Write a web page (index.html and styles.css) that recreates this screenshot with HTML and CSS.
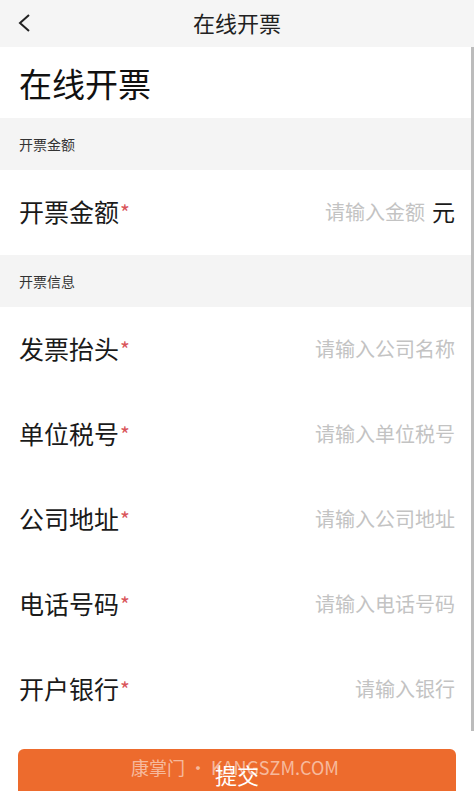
FILE: index.html
```html
<!DOCTYPE html>
<html lang="zh-CN">
<head>
  <meta charset="UTF-8">
  <meta name="viewport" content="width=device-width, initial-scale=1.0">
  <title>在线开票</title>
  <link rel="stylesheet" href="styles.css">
</head>
<body>
  <div class="navbar">
    <svg class="back" width="16" height="20" viewBox="0 0 16 20">
      <path d="M12 2 L3 10 L12 18" fill="none" stroke="#222" stroke-width="2"/>
    </svg>
    <div class="nav-title">在线开票</div>
  </div>

  <div class="page-title">在线开票</div>

  <div class="section">开票金额</div>
  <div class="row">
    <div class="label">开票金额<span class="req">*</span></div>
    <div class="field">
      <span class="placeholder">请输入金额</span>
      <span class="unit">元</span>
    </div>
  </div>

  <div class="section">开票信息</div>
  <div class="row">
    <div class="label">发票抬头<span class="req">*</span></div>
    <span class="placeholder">请输入公司名称</span>
  </div>
  <div class="row">
    <div class="label">单位税号<span class="req">*</span></div>
    <span class="placeholder">请输入单位税号</span>
  </div>
  <div class="row">
    <div class="label">公司地址<span class="req">*</span></div>
    <span class="placeholder">请输入公司地址</span>
  </div>
  <div class="row">
    <div class="label">电话号码<span class="req">*</span></div>
    <span class="placeholder">请输入电话号码</span>
  </div>
  <div class="row">
    <div class="label">开户银行<span class="req">*</span></div>
    <span class="placeholder">请输入银行</span>
  </div>

  <div class="actions">
    <button class="submit">提交</button>
  </div>

  <div class="scrollbar"></div>
  <div class="watermark">康掌门 • KANGSZM.COM</div>
</body>
</html>
```

FILE: styles.css
```css
html, body {
  margin: 0;
  height: 791px;
  overflow: hidden;
}

body {
  font-family: "Noto Sans CJK SC", "Noto Sans", sans-serif;
  background: #fff;
  color: #1a1a1a;
  position: relative;
}

.navbar {
  height: 47px;
  background: #f5f5f5;
  display: flex;
  align-items: center;
  justify-content: center;
  position: relative;
}

.back {
  position: absolute;
  left: 17px;
  top: 13px;
}

.nav-title {
  font-size: 22px;
  line-height: 1;
  margin-top: -3px;
  color: #222;
}

.page-title {
  height: 71px;
  display: flex;
  align-items: center;
  padding-left: 19px;
  font-size: 33px;
  color: #111;
}

.section {
  height: 52px;
  background: #f4f4f4;
  display: flex;
  align-items: center;
  padding-left: 19px;
  font-size: 14px;
  color: #333;
}

.row {
  height: 85px;
  display: flex;
  align-items: center;
  justify-content: space-between;
  padding: 0 19px;
}

.row:nth-of-type(2) {
  height: 84px;
}

.label {
  font-size: 25px;
  line-height: 1;
  margin-top: -3px;
  color: #1a1a1a;
}

.req {
  color: #d9545a;
  font-size: 21px;
  margin-left: 1px;
  vertical-align: 1px;
}

.field {
  display: flex;
  align-items: center;
  gap: 7px;
  margin-top: -3px;
}

.row > .placeholder {
  margin-top: -3px;
}

.placeholder {
  font-size: 20px;
  color: #c3c3c3;
}

.unit {
  font-size: 23px;
  color: #1a1a1a;
}

.actions {
  padding: 17px 18px 0;
}

.submit {
  width: 100%;
  height: 50px;
  border: none;
  border-radius: 6px;
  background: #ed6b2d;
  color: #fff;
  font-family: inherit;
  font-size: 22px;
  padding: 0;
}

.scrollbar {
  position: absolute;
  right: 0;
  top: 47px;
  width: 3px;
  height: 684px;
  background: #bcbcbc;
}

.watermark {
  position: absolute;
  left: 131px;
  top: 754px;
  font-size: 18px;
  color: rgba(255, 255, 255, 0.55);
  white-space: nowrap;
}
```
